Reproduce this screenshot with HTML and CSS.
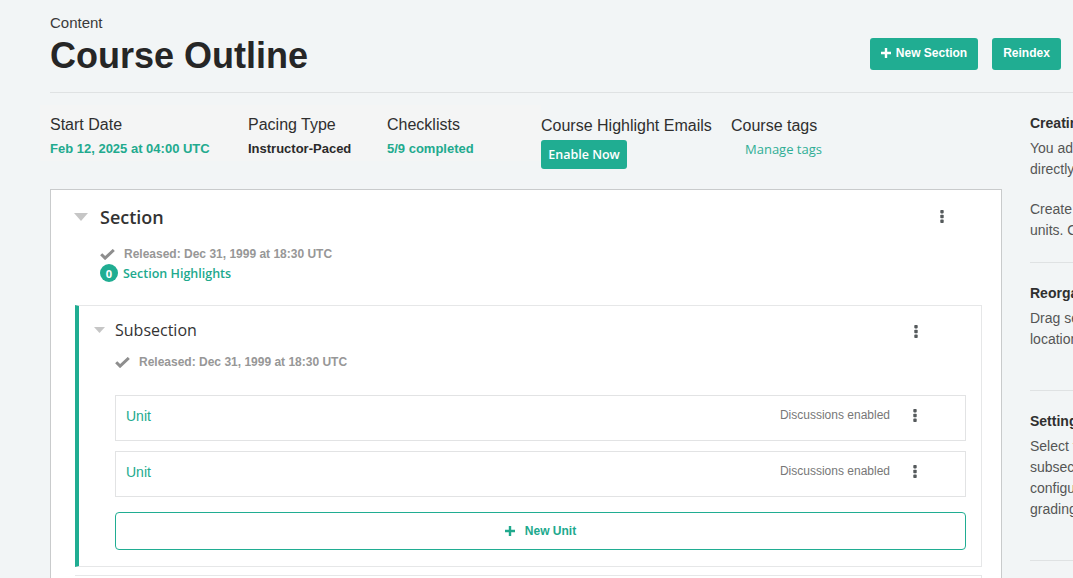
FILE: index.html
```html
<!DOCTYPE html>
<html lang="en">
<head>
<meta charset="utf-8">
<title>Course Outline</title>
<link rel="stylesheet" href="styles.css">
</head>
<body>
<div class="page">
  <header class="page-header">
    <div class="header-row">
      <div class="titles">
        <div class="eyebrow">Content</div>
        <h1 class="page-title">Course Outline</h1>
      </div>
      <div class="header-actions">
        <button class="btn btn-primary btn-new-section"><svg class="plus" width="10" height="10" viewBox="0 0 10 10"><path d="M3.8 0h2.4v3.8H10v2.4H6.2V10H3.8V6.2H0V3.8h3.8z" fill="currentColor"/></svg>New Section</button>
        <button class="btn btn-primary btn-reindex">Reindex</button>
      </div>
    </div>
  </header>

  <div class="layout">
    <main class="main-col">
      <div class="stats">
        <div class="stats-group">
          <div class="stat stat-start">
            <div class="stat-label">Start Date</div>
            <div class="stat-value teal">Feb 12, 2025 at 04:00 UTC</div>
          </div>
          <div class="stat stat-pacing">
            <div class="stat-label">Pacing Type</div>
            <div class="stat-value">Instructor-Paced</div>
          </div>
          <div class="stat stat-check">
            <div class="stat-label">Checklists</div>
            <div class="stat-value teal">5/9 completed</div>
          </div>
        </div>
        <div class="stat stat-emails">
          <div class="stat-label">Course Highlight Emails</div>
          <button class="btn-enable">Enable Now</button>
        </div>
        <div class="stat stat-tags">
          <div class="stat-label">Course tags</div>
          <a class="manage-tags">Manage tags</a>
        </div>
      </div>

      <section class="card">
        <div class="section-head">
          <svg class="caret" width="14" height="8" viewBox="0 0 14 8"><path d="M0 0h14L7 8z" fill="#c6c6c6"/></svg>
          <h2 class="section-title">Section</h2>
          <svg class="kebab kebab-section" width="4" height="13" viewBox="0 0 4 13"><rect x="0.3" y="0" width="3.4" height="3.4" rx="0.8"/><rect x="0.3" y="4.8" width="3.4" height="3.4" rx="0.8"/><rect x="0.3" y="9.6" width="3.4" height="3.4" rx="0.8"/></svg>
        </div>
        <div class="section-status">
          <div class="status-line">
            <svg class="check" width="15" height="11" viewBox="0 0 15 11"><path d="M1.2 5.2l3.9 3.9L13.8 1" stroke="#8e8e8e" stroke-width="3" fill="none"/></svg>
            <span>Released: Dec 31, 1999 at 18:30 UTC</span>
          </div>
          <div class="highlights">
            <span class="badge">0</span>
            <span class="highlights-text">Section Highlights</span>
          </div>
        </div>

        <div class="subsection">
          <div class="sub-head">
            <svg class="caret-sm" width="11" height="6" viewBox="0 0 11 6"><path d="M0 0h11L5.5 6z" fill="#c6c6c6"/></svg>
            <h3 class="sub-title">Subsection</h3>
            <svg class="kebab kebab-sub" width="4" height="13" viewBox="0 0 4 13"><rect x="0.3" y="0" width="3.4" height="3.4" rx="0.8"/><rect x="0.3" y="4.8" width="3.4" height="3.4" rx="0.8"/><rect x="0.3" y="9.6" width="3.4" height="3.4" rx="0.8"/></svg>
          </div>
          <div class="status-line sub-status">
            <svg class="check" width="15" height="11" viewBox="0 0 15 11"><path d="M1.2 5.2l3.9 3.9L13.8 1" stroke="#8e8e8e" stroke-width="3" fill="none"/></svg>
            <span>Released: Dec 31, 1999 at 18:30 UTC</span>
          </div>

          <div class="units">
            <div class="unit">
              <a class="unit-title">Unit</a>
              <span class="unit-meta">Discussions enabled</span>
              <svg class="kebab" width="4" height="13" viewBox="0 0 4 13"><rect x="0.3" y="0" width="3.4" height="3.4" rx="0.8"/><rect x="0.3" y="4.8" width="3.4" height="3.4" rx="0.8"/><rect x="0.3" y="9.6" width="3.4" height="3.4" rx="0.8"/></svg>
            </div>
            <div class="unit">
              <a class="unit-title">Unit</a>
              <span class="unit-meta">Discussions enabled</span>
              <svg class="kebab" width="4" height="13" viewBox="0 0 4 13"><rect x="0.3" y="0" width="3.4" height="3.4" rx="0.8"/><rect x="0.3" y="4.8" width="3.4" height="3.4" rx="0.8"/><rect x="0.3" y="9.6" width="3.4" height="3.4" rx="0.8"/></svg>
            </div>
            <button class="btn-new-unit"><svg class="plus" width="10" height="10" viewBox="0 0 10 10"><path d="M3.8 0h2.4v3.8H10v2.4H6.2V10H3.8V6.2H0V3.8h3.8z" fill="currentColor"/></svg>New Unit</button>
          </div>
        </div>
        <div class="subsection subsection-next"></div>
      </section>
    </main>

    <aside class="sidebar">
      <div class="help">
        <h4 class="help-title">Creating your course organization</h4>
        <p class="help-text">You add sections, subsections, and units directly in the outline.</p>
        <p class="help-text help-last">Create a section, then add subsections and units. Open a unit to add course components.</p>
      </div>
      <div class="help">
        <h4 class="help-title">Reorganize your course</h4>
        <p class="help-text">Drag sections, subsections, and units to new locations in the outline.</p>
      </div>
      <div class="help">
        <h4 class="help-title">Setting release dates and grading policies</h4>
        <p class="help-text">Select the Configure icon for a section or subsection to set its release date. When you configure a subsection, you can also set the grading policy and due date.</p>
      </div>
    </aside>
  </div>
</div>
</body>
</html>
```

FILE: styles.css
```css
html, body {
  margin: 0;
  padding: 0;
  overflow: hidden;
  background: #f2f5f6;
}

body {
  font-family: "Liberation Sans", Arial, sans-serif;
  color: #2b2b2b;
}

.page {
  width: 1400px;
  padding-left: 50px;
  height: 578px;
  overflow: hidden;
}

/* Header */
.page-header {
  border-bottom: 1px solid #dfe2e3;
  padding-bottom: 16px;
}

.header-row {
  width: 1011px;
  display: flex;
  justify-content: space-between;
  align-items: flex-start;
}

.eyebrow {
  padding-top: 15px;
  font-size: 15px;
  line-height: 16px;
  color: #3a3a3a;
}

.page-title {
  margin: 5px 0 0;
  font-size: 36px;
  line-height: 40px;
  font-weight: 700;
  color: #262626;
}

.header-actions {
  display: flex;
  gap: 14px;
  padding-top: 38px;
}

.btn {
  border: 0;
  font-family: "Liberation Sans", Arial, sans-serif;
  font-size: 12px;
  font-weight: 700;
  height: 32px;
  border-radius: 3px;
  cursor: pointer;
  display: inline-flex;
  align-items: center;
  justify-content: center;
  gap: 5px;
  white-space: nowrap;
  padding: 0 0 2px;
}

.btn-primary {
  background: #20ad92;
  color: #fff;
}

.btn-new-section {
  width: 108px;
}

.btn-reindex {
  width: 69px;
}

/* Layout */
.layout {
  display: grid;
  grid-template-columns: 952px 290px;
  column-gap: 28px;
  padding-top: 20px;
  align-items: start;
}

/* Stats */
.stats {
  display: flex;
  align-items: flex-start;
  margin-bottom: 20px;
  padding-top: 2px;
}

.stats-group {
  display: flex;
  background: #f4f5f5;
  margin-left: -10px;
  padding: 10px 10px 4px 10px;
  margin-top: -10px;
}

.stat-label {
  font-size: 16px;
  line-height: 20px;
  color: #2f2f2f;
}

.stat-value {
  margin-top: 6px;
  font-size: 13px;
  line-height: 16px;
  font-weight: 700;
  color: #2a2a2a;
}

.teal {
  color: #22aa8e;
}

.stat-start { width: 198px; }
.stat-pacing { width: 139px; }
.stat-check { width: 144px; }
.stat-emails { width: 190px; }

.stat-emails .stat-label,
.stat-tags .stat-label {
  line-height: 21px;
}

.btn-enable {
  margin-top: 4px;
  height: 29px;
  width: 86px;
  padding: 0;
  border: 0;
  border-radius: 3px;
  background: #20ad92;
  color: #fff;
  font-family: "Open Sans", sans-serif;
  font-size: 12.5px;
  font-weight: 600;
  white-space: nowrap;
}

.manage-tags {
  display: block;
  margin-top: 4px;
  padding-left: 14px;
  font-family: "Open Sans", sans-serif;
  font-size: 13px;
  line-height: 18px;
  color: #2fae95;
}

/* Card */
.card {
  background: #fff;
  border: 1px solid #c9cbcc;
  padding: 15px 19px 0 24px;
  height: 420px;
}

.section-head {
  display: flex;
  align-items: center;
  height: 24px;
}

.caret {
  margin-left: -1px;
  margin-right: 12px;
}

.section-title {
  margin: 0;
  font-family: "Open Sans", sans-serif;
  font-weight: 600;
  font-size: 18px;
  line-height: 24px;
  color: #333;
}

.kebab {
  fill: #555a5c;
}

.kebab-section {
  margin-left: auto;
  margin-right: 38px;
  margin-top: -2px;
}

.section-status {
  padding-left: 25px;
  margin-top: 16px;
}

.status-line {
  display: flex;
  align-items: center;
  height: 18px;
  font-size: 12px;
  font-weight: 700;
  color: #979797;
}

.check {
  margin-right: 9px;
}

.highlights {
  display: flex;
  align-items: center;
  margin-top: 1px;
  height: 18px;
}

.badge {
  width: 18px;
  height: 18px;
  border-radius: 50%;
  background: #20ad92;
  color: #fff;
  font-family: "Open Sans", sans-serif;
  font-size: 11px;
  font-weight: 700;
  display: inline-flex;
  align-items: center;
  justify-content: center;
  margin-right: 5px;
}

.highlights-text {
  font-family: "Open Sans", sans-serif;
  font-size: 12.5px;
  font-weight: 600;
  color: #20a98d;
}

/* Subsection */
.subsection {
  margin-top: 23px;
  border-left: 4px solid #20ad92;
  border-top: 1px solid #e6e7e8;
  border-right: 1px solid #e6e7e8;
  border-bottom: 1px solid #e6e7e8;
  padding: 13px 15px 16px 15px;
}

.subsection-next {
  margin-top: 8px;
  border-left: 0;
  height: 20px;
  padding: 0;
}

.sub-head {
  display: flex;
  align-items: center;
  height: 22px;
}

.caret-sm {
  margin-right: 10px;
}

.sub-title {
  margin: 0;
  font-family: "Open Sans", sans-serif;
  font-weight: 400;
  font-size: 16px;
  line-height: 22px;
  color: #333;
}

.kebab-sub {
  margin-left: auto;
  margin-right: 48px;
  margin-top: 2px;
}

.sub-status {
  margin-top: 12px;
  padding-left: 21px;
}

.units {
  margin-top: 24px;
  padding-left: 21px;
  display: flex;
  flex-direction: column;
  gap: 10px;
}

.unit {
  display: flex;
  align-items: center;
  height: 44px;
  border: 1px solid #e2e3e4;
  padding: 0 48px 0 10px;
}

.unit-title {
  font-size: 14px;
  color: #22aa8e;
  margin-top: -4px;
}

.unit-meta {
  margin-left: auto;
  margin-right: 23px;
  font-size: 12px;
  color: #777;
  margin-top: -6px;
}

.unit .kebab {
  margin-top: -5px;
}

.btn-new-unit {
  margin-top: 5px;
  height: 38px;
  border: 1px solid #20ad92;
  border-radius: 4px;
  background: #fff;
  color: #20a98d;
  font-family: "Liberation Sans", Arial, sans-serif;
  font-size: 12px;
  font-weight: 700;
  display: flex;
  align-items: center;
  justify-content: center;
  gap: 10px;
}

/* Sidebar */
.sidebar {
  width: 290px;
}

.help {
  border-bottom: 1px solid #dfe2e3;
  padding: 20px 0 21px;
}

.help:first-child {
  padding-top: 0;
}

.help-title {
  margin: 0 0 5px;
  font-size: 14px;
  line-height: 20px;
  font-weight: 700;
  color: #2f2f2f;
}

.help-text {
  margin: 0 0 19px;
  font-size: 14px;
  line-height: 21px;
  color: #555;
}

.help-last {
  margin-bottom: 0;
}
```
